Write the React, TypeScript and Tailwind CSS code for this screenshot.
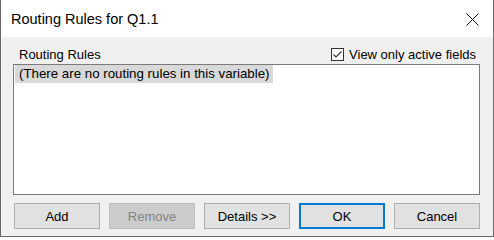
import React from "react";

const font = { fontFamily: '"Liberation Sans", Arial, sans-serif' };

function DialogButton({
  label,
  disabled,
  primary,
}: {
  label: string;
  disabled?: boolean;
  primary?: boolean;
}) {
  const base = "h-[26px] w-[86px] text-[13px] leading-none flex items-center justify-center";
  if (disabled) {
    return (
      <button disabled className={`${base} border border-[#bfbfbf] bg-[#cccccc] text-[#838383]`}>
        {label}
      </button>
    );
  }
  if (primary) {
    return (
      <button className={`${base} border-2 border-[#0078d7] bg-[#e1e1e1] text-black`}>{label}</button>
    );
  }
  return (
    <button className={`${base} border border-[#adadad] bg-[#e1e1e1] text-black`}>{label}</button>
  );
}

export default function App() {
  return (
    <div
      style={font}
      className="flex h-[237px] w-[494px] flex-col border-x border-b border-[#6a6a6a] bg-[#f0f0f0] text-black"
    >
      {/* title bar */}
      <div className="flex h-[37px] shrink-0 items-center justify-between bg-white pl-[10px] pr-[14px]">
        <span className="pt-[2px] text-[14.5px]">Routing Rules for Q1.1</span>
        <svg width="13" height="13" viewBox="0 0 13 13" className="mt-[1px]">
          <path d="M0.5 0.5 L12.5 12.5 M12.5 0.5 L0.5 12.5" stroke="#111" strokeWidth="1" fill="none" />
        </svg>
      </div>

      {/* label row */}
      <div className="flex h-[27px] shrink-0 items-center justify-between pl-[18px] pr-[17px] pt-[8px]">
        <span className="text-[13px] leading-4">Routing Rules</span>
        <label className="flex items-center gap-[5px] text-[13px] leading-4">
          <span className="flex h-[13px] w-[13px] items-center justify-center border border-[#333] bg-white">
            <svg width="11" height="11" viewBox="0 0 11 11">
              <path d="M1.5 5.5 L4 8 L9.5 2.5" stroke="#333" strokeWidth="1.1" fill="none" />
            </svg>
          </span>
          View only active fields
        </label>
      </div>

      {/* list */}
      <div className="ml-[12px] mr-[13px] h-[131px] shrink-0 border border-[#7a7a7a] bg-white px-[1px] pt-0">
        <div className="w-fit bg-[#d9d9d9] pl-[4px] pr-[3px] text-[13.3px] leading-[18px]">
          (There are no routing rules in this variable)
        </div>
      </div>

      {/* buttons */}
      <div className="ml-[13px] mr-[13px] mt-[8px] flex justify-between">
        <DialogButton label="Add" />
        <DialogButton label="Remove" disabled />
        <DialogButton label="Details >>" />
        <DialogButton label="OK" primary />
        <DialogButton label="Cancel" />
      </div>
    </div>
  );
}
